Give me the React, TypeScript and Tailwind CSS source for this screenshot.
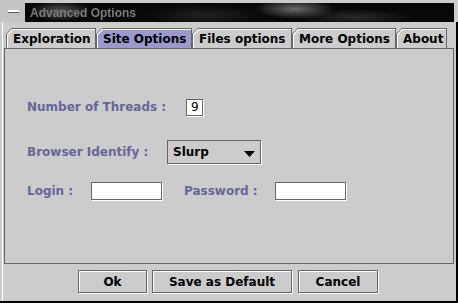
import React from "react";

const tabs = [
  { label: "Exploration", w: "w-[90px]" },
  { label: "Site Options", w: "w-[96px]", selected: true },
  { label: "Files options", w: "w-[100px]" },
  { label: "More Options", w: "w-[104px]" },
  { label: "About", w: "w-[51px]" },
];

const Tab = ({ label, w, selected }: { label: string; w: string; selected?: boolean }) => {
  return (
    <div className={`${w} h-[20px] bg-[#666666] pt-px px-px [clip-path:polygon(0_6px,6px_0,100%_0,100%_100%,0_100%)]`}>
      <div className="h-full bg-white pt-px pl-px [clip-path:polygon(0_5px,5px_0,100%_0,100%_100%,0_100%)]">
        <div
          className={`h-full flex items-center pl-[5px] text-black font-bold text-[12px] ${
            selected ? "bg-[#9999cc]" : "bg-[#cccccc]"
          } [clip-path:polygon(0_5px,5px_0,100%_0,100%_100%,0_100%)]`}
        >
          {label}
        </div>
      </div>
    </div>
  );
};

const Field = ({ w, h, value }: { w: string; h: string; value?: string }) => {
  return (
    <div
      className={`${w} ${h} bg-white border border-[#666666] shadow-[1px_1px_0_#ffffff] flex items-center pl-[4px] text-[12px] font-normal text-black`}
    >
      {value}
    </div>
  );
};

const Button = ({ label, w }: { label: string; w: string }) => {
  return (
    <div
      className={`${w} h-[23px] border border-[#666666] shadow-[inset_1px_1px_0_#ffffff,1px_1px_0_#ffffff] flex items-center justify-center font-bold text-[12px] text-black`}
    >
      {label}
    </div>
  );
};

export default function App() {
  return (
    <div className="w-[458px] h-[303px] bg-[#cccccc] flex flex-col overflow-hidden font-['DejaVu_Sans',sans-serif]">
      {/* title bar */}
      <div className="h-[22px] flex pt-[3px] pr-[4px]">
        <div className="w-[25px] -mt-[3px] h-[22px] bg-[#c4c4c4] flex items-center pl-[8px]">
          <div className="w-[11px] h-[2px] bg-white shadow-[0_1px_0_#555555]" />
        </div>
        <div className="flex-1 flex items-center pl-[5px] bg-[#080808] bg-[radial-gradient(ellipse_30px_10px_at_35px_8px,#555555,transparent),radial-gradient(ellipse_40px_10px_at_270px_6px,#6a6a6a,transparent),radial-gradient(ellipse_60px_8px_at_330px_14px,#2a2a2a,transparent),radial-gradient(ellipse_60px_10px_at_180px_12px,#222222,transparent)]">
          <span className="font-['Liberation_Sans',sans-serif] font-bold text-[12px] text-[#7c7c7c] blur-[0.3px]">
            Advanced Options
          </span>
        </div>
      </div>

      {/* window body */}
      <div className="flex-1 flex border-r-2 border-b-2 border-black">
        <div className="w-[2px]" />
        <div className="w-px bg-white" />
        <div className="flex-1 flex flex-col">
          <div className="flex ml-[3px] mt-[6px]">
            {tabs.map((t) => (
              <Tab key={t.label} label={t.label} w={t.w} selected={t.selected} />
            ))}
          </div>

          <div className="ml-px w-[450px] h-[216px] border border-[#666666] flex flex-col pl-[22px] text-[12px] font-bold text-[#666699]">
            <div className="flex items-center mt-[49px]">
              <span className="w-[159px]">Number of Threads :</span>
              <Field w="w-[17px]" h="h-[17px]" value="9" />
            </div>

            <div className="flex items-center mt-[24px]">
              <span className="w-[140px]">Browser Identify :</span>
              <div className="w-[94px] h-[24px] border border-[#666666] shadow-[1px_1px_0_#ffffff] flex items-center justify-between pl-[5px] pr-[5px] text-black">
                <span>Slurp</span>
                <svg width="11" height="6" viewBox="0 0 11 6" className="mt-[3px]">
                  <polygon points="0,0 11,0 5.5,6" fill="#000000" />
                </svg>
              </div>
            </div>

            <div className="flex items-center mt-[18px]">
              <span className="w-[64px]">Login :</span>
              <Field w="w-[71px]" h="h-[18px]" />
              <span className="w-[91px] ml-[22px]">Password :</span>
              <Field w="w-[71px]" h="h-[18px]" />
            </div>
          </div>

          <div className="flex mt-[6px] pl-[75px]">
            <Button label="Ok" w="w-[69px]" />
            <div className="w-[5px]" />
            <Button label="Save as Default" w="w-[140px]" />
            <div className="w-[6px]" />
            <Button label="Cancel" w="w-[80px]" />
          </div>
        </div>
      </div>
    </div>
  );
}
